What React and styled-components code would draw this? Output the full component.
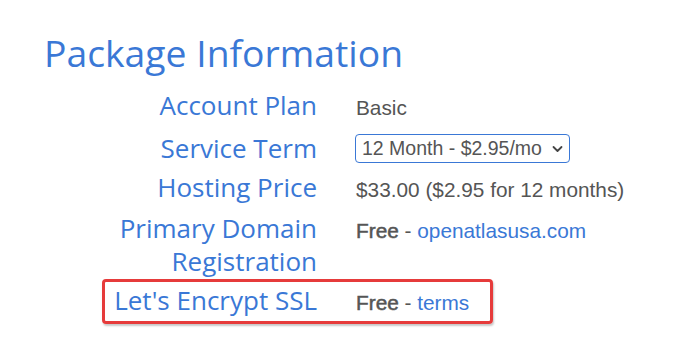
import React from "react";
import styled, { createGlobalStyle } from "styled-components";

const Global = createGlobalStyle`
  html, body { margin: 0; padding: 0; background: #fff; }
  body { width: 679px; height: 356px; overflow: hidden; }
`;

const Page = styled.div`
  padding: 28px 0 0 44px;
  font-family: "Open Sans", sans-serif;
`;

const Title = styled.h1`
  margin: 0 0 8px 0;
  font-family: "Open Sans", sans-serif;
  font-weight: 400;
  font-size: 37.3px;
  line-height: 50px;
  color: #3a78d6;
`;

const Rows = styled.div`
  display: flex;
  flex-direction: column;
  margin-left: 58px;
`;

const Row = styled.div`
  display: flex;
  align-items: baseline;
  gap: 39px;
  width: fit-content;
  margin-top: ${(p) => p.$mt || "0"};
  padding: ${(p) => p.$pt || "0"} 21px ${(p) => p.$pb || "0"} 0;
  border: 3px solid ${(p) => (p.$highlight ? "#e63b3b" : "transparent")};
  border-radius: 4px;
  box-shadow: ${(p) => (p.$highlight ? "1px 2px 2px rgba(0,0,0,0.22)" : "none")};
`;

const Label = styled.div`
  width: 212px;
  flex: none;
  text-align: right;
  font-family: "Open Sans", sans-serif;
  font-size: 26px;
  line-height: 33px;
  color: #3a78d6;
`;

const Value = styled.div`
  font-family: "Liberation Sans", Arial, sans-serif;
  font-size: 20.8px;
  color: #555;
  white-space: nowrap;
`;

const Strong = styled.span`
  font-weight: 400;
  color: #555;
  -webkit-text-stroke: 0.5px #555;
`;

const Link = styled.a`
  color: #3a78d6;
  text-decoration: none;
`;

const SelectBox = styled.div`
  display: inline-flex;
  align-items: center;
  justify-content: space-between;
  box-sizing: border-box;
  width: 215px;
  height: 29px;
  padding: 0 6px 0 6px;
  border: 1px solid #3a78d6;
  border-radius: 4px;
  font-family: "Liberation Sans", Arial, sans-serif;
  font-size: 19.5px;
  color: #555;
  margin-left: -1px;
  align-self: center;
`;

const Chevron = () => (
  <svg width="11" height="8" viewBox="0 0 11 8" aria-hidden="true">
    <path d="M1.5 2 L5.5 6 L9.5 2" fill="none" stroke="#444" strokeWidth="1.8" strokeLinecap="round" strokeLinejoin="round" />
  </svg>
);

export default function App() {
  return (
    <>
      <Global />
      <Page>
        <Title>Package Information</Title>
        <Rows>
          <Row>
            <Label>Account Plan</Label>
            <Value>Basic</Value>
          </Row>
          <Row $pt="4px">
            <Label>Service Term</Label>
            <SelectBox>
              <span>12 Month - $2.95/mo</span>
              <Chevron />
            </SelectBox>
          </Row>
          <Row>
            <Label>Hosting Price</Label>
            <Value>$33.00 ($2.95 for 12 months)</Value>
          </Row>
          <Row $mt="2px">
            <Label>Primary Domain Registration</Label>
            <Value>
              <Strong>Free</Strong> - <Link>openatlasusa.com</Link>
            </Value>
          </Row>
          <Row $highlight $mt="-2px" $pt="2px" $pb="4px">
            <Label>Let's Encrypt SSL</Label>
            <Value>
              <Strong>Free</Strong> - <Link>terms</Link>
            </Value>
          </Row>
        </Rows>
      </Page>
    </>
  );
}
